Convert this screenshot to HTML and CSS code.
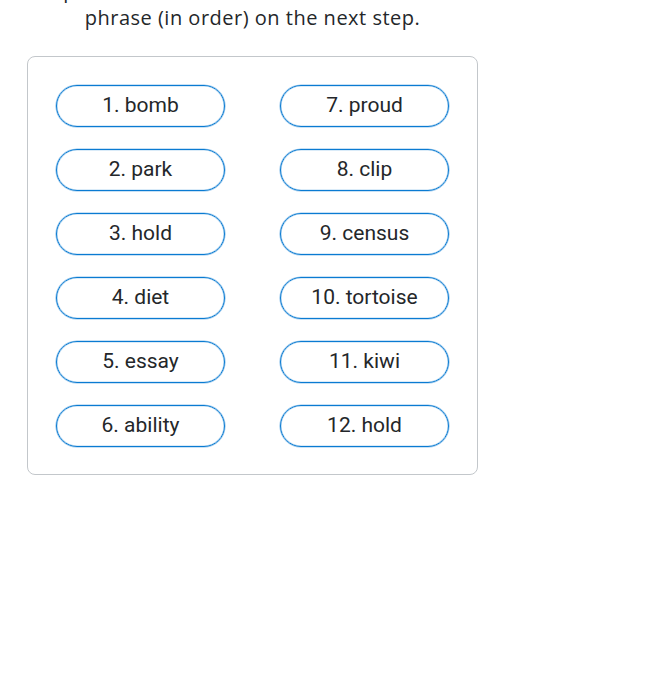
FILE: index.html
```html
<!DOCTYPE html>
<html>
<head>
<meta charset="utf-8">
<link rel="stylesheet" href="styles.css">
</head>
<body>
<div class="page">
  <p class="intro"><span class="prev">Keep it somewhere safe and re-enter the whole</span><br>phrase (in order) on the next step.</p>
  <div class="words">
    <div class="col">
      <div class="word">1. bomb</div>
      <div class="word">2. park</div>
      <div class="word">3. hold</div>
      <div class="word">4. diet</div>
      <div class="word">5. essay</div>
      <div class="word">6. ability</div>
    </div>
    <div class="col">
      <div class="word">7. proud</div>
      <div class="word">8. clip</div>
      <div class="word">9. census</div>
      <div class="word">10. tortoise</div>
      <div class="word">11. kiwi</div>
      <div class="word">12. hold</div>
    </div>
  </div>
</div>
</body>
</html>
```
FILE: styles.css
```css
html, body {
  margin: 0;
  padding: 0;
  background: #ffffff;
}
.page {
  width: 451px;
  margin-left: 27px;
  overflow: hidden;
}
.intro {
  margin: -23px 0 0 0;
  font-family: "Open Sans", "Noto Sans", sans-serif;
  font-size: 20px;
  letter-spacing: 0.5px;
  line-height: 27px;
  color: #24272a;
  text-align: center;
  white-space: nowrap;
}
.prev {
  display: inline-block;
}
.words {
  margin-top: 25px;
  box-sizing: border-box;
  border: 1px solid #c3c7cb;
  border-radius: 8px;
  padding: 28px 28px 27px 28px;
  display: grid;
  grid-template-columns: 169px 169px;
  column-gap: 55px;
}
.col {
  display: flex;
  flex-direction: column;
  gap: 22px;
}
.word {
  box-sizing: border-box;
  height: 42px;
  padding-bottom: 3px;
  border: 1px solid #0a7bd2;
  box-shadow: 0 0 0 0.6px rgba(10, 123, 210, 0.45), inset 0 0 0 0.6px rgba(10, 123, 210, 0.3);
  border-radius: 21px;
  font-family: "Roboto", sans-serif;
  font-size: 21px;
  color: #24272a;
  display: flex;
  align-items: center;
  justify-content: center;
}
```
